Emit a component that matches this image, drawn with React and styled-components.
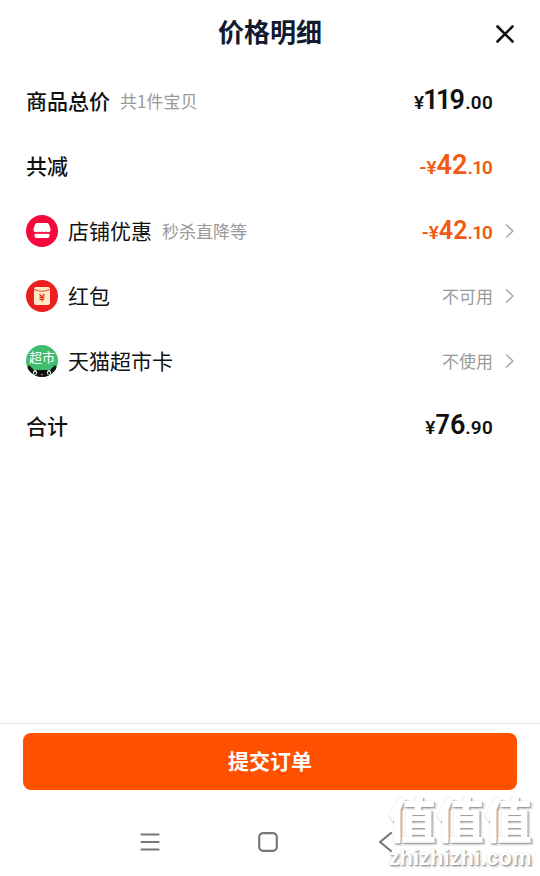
import React from 'react';
import styled, { createGlobalStyle } from 'styled-components';

const GlobalStyle = createGlobalStyle`
  * {
    box-sizing: border-box;
  }
  body {
    margin: 0;
    background: #fff;
    color: #111;
    font-family: "Noto Sans CJK SC", sans-serif;
  }
  button {
    border: 0;
    padding: 0;
    background: none;
    color: inherit;
    font: inherit;
    cursor: pointer;
  }
`;

const Page = styled.div`
  display: flex;
  flex-direction: column;
  min-height: 100vh;
`;

const Header = styled.header`
  display: grid;
  grid-template-columns: 20px 1fr 20px;
  align-items: center;
  height: 68px;
  padding: 0 25px;
`;

const Title = styled.h1`
  grid-column: 2;
  margin: 0;
  padding-bottom: 6px;
  color: #111a2e;
  font-size: 26px;
  font-weight: 700;
  line-height: 36px;
  text-align: center;
`;

const CloseButton = styled.button`
  display: flex;
`;

const Details = styled.main`
  flex: 1;
`;

const Row = styled.div`
  display: grid;
  grid-template-columns: 1fr auto 9px;
  align-items: center;
  column-gap: 12px;
  width: 100%;
  height: 65px;
  padding: 0 26px;
  text-align: left;
`;

const Heading = styled.span`
  display: flex;
  align-items: center;
  gap: 10px;
`;

const Label = styled.span`
  padding-bottom: 2px;
  font-size: 21px;
  font-weight: ${props => (props.$strong ? 500 : 400)};
  line-height: 32px;
`;

const Note = styled.span`
  color: #999;
  font-size: 17px;
  line-height: 32px;
`;

const Price = styled.span`
  padding-top: 2px;
  color: ${props => (props.$discount ? '#f15a12' : '#111')};
  font-family: Roboto, "Noto Sans CJK SC", sans-serif;
  font-size: 19px;
  font-weight: 600;
  font-variant-numeric: proportional-nums;
  line-height: 32px;
`;

const Whole = styled.span`
  font-size: ${props => (props.$small ? 25 : 27)}px;
`;

const Footer = styled.footer`
  border-top: 1px solid #dfe3e6;
  padding: 9px 23px 0;
`;

const SubmitButton = styled.button`
  display: block;
  width: 100%;
  height: 57px;
  border-radius: 8px;
  padding-bottom: 4px;
  background: #ff5000;
  color: #fff;
  font-size: 21px;
  font-weight: 700;
`;

const SystemBar = styled.nav`
  display: flex;
  justify-content: center;
  gap: 98px;
  padding: 42px 4px 24px 0;
`;

const SystemButton = styled.button`
  display: flex;
`;

const Watermark = styled.div`
  position: absolute;
  right: 8px;
  bottom: 6px;
  display: flex;
  flex-direction: column;
  align-items: center;
  gap: 2px;
  color: #fff;
  text-shadow: 1px 1px 1px #999, 2px 2px 2px #ccc, 0 0 2px #ddd;
  pointer-events: none;
`;

const WatermarkName = styled.span`
  font-size: 48px;
  font-weight: 900;
  line-height: 54px;
`;

const WatermarkSite = styled.span`
  font-family: "Liberation Sans", sans-serif;
  font-size: 22px;
  font-weight: 700;
  line-height: 24px;
`;

const ShopIcon = () => (
  <svg width="32" height="32" viewBox="0 0 32 32" aria-hidden="true">
    <circle cx="16" cy="16" r="16" fill="#f40a3d" />
    <path d="M11 8h10q1.500 0 2 1.500l1.500 4.500q.5 3-2.300 3.200-1.500 0-2.200-.8-1 .8-2 .8t-2-.8q-1 .8-2 .8t-2-.8q-.7.8-2.200.8-2.600-.2-2.300-3.200L9 9.500Q9.500 8 11 8z" fill="#fff" />
    <path d="M8.500 18.800q2 .5 3.500-.2 2 1 4 0 2 1 4 0 1.500.7 3.500.2V21q0 2-2 2h-11q-2 0-2-2z" fill="#fff" />
  </svg>
);

const RedPacketIcon = () => (
  <svg width="32" height="32" viewBox="0 0 32 32" aria-hidden="true">
    <circle cx="16" cy="16" r="16" fill="#ec2020" />
    <rect x="8" y="7" width="16" height="18" rx="2" fill="#ffe9c4" />
    <path d="M8 9.500Q16 13 24 9.500" fill="none" stroke="#e0563a" strokeWidth="1.200" />
    <path d="M13.500 14l2.500 3 2.500-3M16 17v4.500M13.500 17.300h5M13.500 19.300h5" fill="none" stroke="#dc3a24" strokeWidth="1.200" />
  </svg>
);

const MarketIcon = () => (
  <svg width="32" height="32" viewBox="0 0 32 32">
    <clipPath id="market">
      <circle cx="16" cy="16" r="16" />
    </clipPath>
    <g clipPath="url(#market)">
      <rect width="32" height="32" fill="#41bd72" />
      <path d="M3 20l5 5h16l5-5 3 5v8H0v-8z" fill="#111" />
      <ellipse cx="9" cy="27.500" rx="2" ry="2.500" fill="#fff" />
      <ellipse cx="23" cy="27.500" rx="2" ry="2.500" fill="#fff" />
      <ellipse cx="9" cy="28" rx="1" ry="1.500" fill="#111" />
      <ellipse cx="23" cy="28" rx="1" ry="1.500" fill="#111" />
      <path d="M14.500 29h3L16 30.500z" fill="#e8667c" />
    </g>
    <text x="16" y="17" fill="#fff" fontSize="13" textAnchor="middle">超市</text>
  </svg>
);

const Chevron = () => (
  <svg width="9" height="16" viewBox="0 0 9 16" aria-hidden="true">
    <path d="M1 1.500L8 8l-7 6.500" fill="none" stroke="#aaa" strokeWidth="1.500" />
  </svg>
);

function Amount({ whole, cents, discount, small }) {
  return (
    <Price $discount={discount}>
      {discount && '-'}¥<Whole $small={small}>{whole}</Whole>.{cents}
    </Price>
  );
}

function DetailRow({ icon, label, note, strong, link, children }) {
  return (
    <Row as={link ? 'button' : 'div'}>
      <Heading>
        {icon}
        <Label $strong={strong}>{label}</Label>
        {note && <Note>{note}</Note>}
      </Heading>
      {children}
      {link && <Chevron />}
    </Row>
  );
}

function App() {
  return (
    <Page>
      <GlobalStyle />
      <Header>
        <Title>价格明细</Title>
        <CloseButton aria-label="关闭">
          <svg width="20" height="20" viewBox="0 0 20 20">
            <path d="M2.500 2.500l15 15m0-15l-15 15" stroke="#111" strokeWidth="2.600" strokeLinecap="round" />
          </svg>
        </CloseButton>
      </Header>

      <Details>
        <DetailRow label="商品总价" note="共1件宝贝" strong>
          <Amount whole="119" cents="00" />
        </DetailRow>
        <DetailRow label="共减" strong>
          <Amount whole="42" cents="10" discount />
        </DetailRow>
        <DetailRow icon={<ShopIcon />} label="店铺优惠" note="秒杀直降等" link>
          <Amount whole="42" cents="10" discount small />
        </DetailRow>
        <DetailRow icon={<RedPacketIcon />} label="红包" link>
          <Note>不可用</Note>
        </DetailRow>
        <DetailRow icon={<MarketIcon />} label="天猫超市卡" link>
          <Note>不使用</Note>
        </DetailRow>
        <DetailRow label="合计" strong>
          <Amount whole="76" cents="90" />
        </DetailRow>
      </Details>

      <Footer>
        <SubmitButton>提交订单</SubmitButton>
        <SystemBar>
          <SystemButton aria-label="菜单">
            <svg width="20" height="20" viewBox="0 0 20 20">
              <path d="M1.500 2.500h17M1.500 10h17M1.500 17.500h17" stroke="#777" strokeWidth="2.200" strokeLinecap="round" />
            </svg>
          </SystemButton>
          <SystemButton aria-label="主页">
            <svg width="20" height="20" viewBox="0 0 20 20">
              <rect x="1.200" y="1.200" width="17.600" height="17.600" rx="4" fill="none" stroke="#777" strokeWidth="2.200" />
            </svg>
          </SystemButton>
          <SystemButton aria-label="返回">
            <svg width="20" height="20" viewBox="0 0 20 20">
              <path d="M15 1L4 10l11 9" fill="none" stroke="#777" strokeWidth="2.200" strokeLinecap="round" strokeLinejoin="round" />
            </svg>
          </SystemButton>
        </SystemBar>
      </Footer>

      <Watermark>
        <WatermarkName>值值值</WatermarkName>
        <WatermarkSite>zhizhizhi.com</WatermarkSite>
      </Watermark>
    </Page>
  );
}

export default App;
